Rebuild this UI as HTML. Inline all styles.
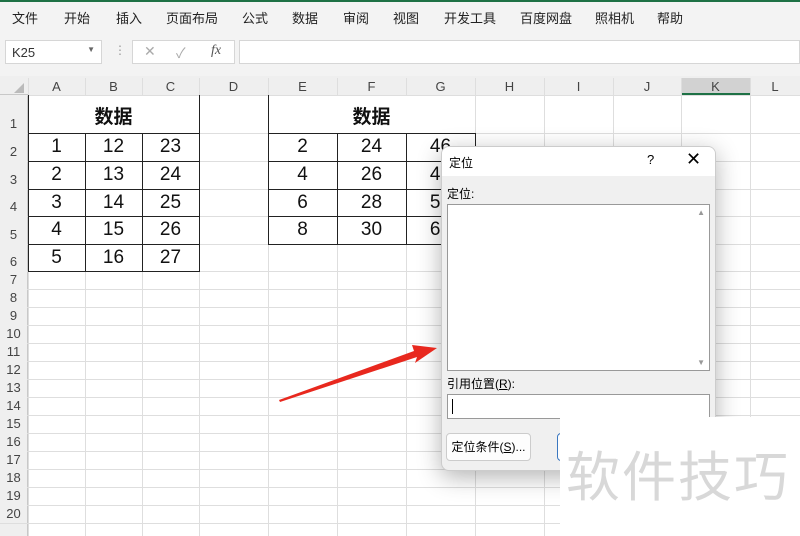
<!DOCTYPE html>
<html><head><meta charset="utf-8"><style>
*{margin:0;padding:0;box-sizing:border-box}
body{width:800px;height:536px;overflow:hidden;background:#fff;font-family:"Liberation Sans","Noto Sans CJK SC",sans-serif;position:relative}
.abs{position:absolute}
.menu{left:0;top:0;width:800px;height:30px;background:#f3f3f3;border-top:2px solid #1e7145}
.menu span{position:absolute;top:6px;font-size:13px;color:#222}
.fbar{left:0;top:30px;width:800px;height:46px;background:#f3f3f3}
.hl{position:absolute;height:1px;background:#dedede}
.vl{position:absolute;width:1px;background:#dedede}
.ch{position:absolute;top:78px;height:17px;font-size:13px;color:#444;text-align:center;line-height:17px;background:#efefef}
.rn{position:absolute;left:0;width:27px;font-size:13px;color:#444;text-align:center;background:#efefef}
.c{position:absolute;font-size:19px;color:#111;text-align:center}
.b{position:absolute;background:#222}
</style></head><body>
<div class="abs menu">
<span style="left:12px">文件</span><span style="left:64px">开始</span><span style="left:116px">插入</span><span style="left:166px">页面布局</span><span style="left:242px">公式</span><span style="left:292px">数据</span><span style="left:343px">审阅</span><span style="left:393px">视图</span><span style="left:444px">开发工具</span><span style="left:520px">百度网盘</span><span style="left:595px">照相机</span><span style="left:657px">帮助</span>
</div>
<div class="abs fbar">
<div class="abs" style="left:5px;top:10px;width:97px;height:24px;background:#fff;border:1px solid #d6d6d6;font-size:13px;padding:4px 6px;color:#333">K25<span style="position:absolute;right:6px;top:4px;font-size:8px;color:#666">▼</span></div>
<div class="abs" style="left:114px;top:13px;color:#999;font-size:12px">⋮</div>
<div class="abs" style="left:132px;top:10px;width:103px;height:24px;background:#fff;border:1px solid #d6d6d6;font-size:14px;color:#aaa"><span style="position:absolute;left:11px;top:2px">✕</span><span style="position:absolute;left:43px;top:2px">✓</span><span style="position:absolute;left:78px;top:2px;color:#555;font-style:italic;font-family:'Liberation Serif'">fx</span></div>
<div class="abs" style="left:239px;top:10px;width:561px;height:24px;background:#fff;border:1px solid #d6d6d6"></div>
</div>
<div class="abs" style="left:0;top:76px;width:800px;height:19px;background:#efefef;border-bottom:1px solid #c8c8c8"></div>
<div class="abs" style="left:0;top:95px;width:28px;height:441px;background:#efefef;border-right:1px solid #c8c8c8"></div>
<div class="abs" style="left:14px;top:83px;width:0;height:0;border-left:10px solid transparent;border-bottom:10px solid #bbb"></div>
<div class="ch" style="left:28px;width:57px">A</div><div class="ch" style="left:85px;width:57px">B</div><div class="ch" style="left:142px;width:57px">C</div><div class="ch" style="left:199px;width:69px">D</div><div class="ch" style="left:268px;width:69px">E</div><div class="ch" style="left:337px;width:69px">F</div><div class="ch" style="left:406px;width:69px">G</div><div class="ch" style="left:475px;width:69px">H</div><div class="ch" style="left:544px;width:69px">I</div><div class="ch" style="left:613px;width:68px">J</div><div class="ch" style="left:681px;width:69px;background:#d2d2d2;border-bottom:2px solid #1e7145">K</div><div class="ch" style="left:750px;width:50px">L</div>
<div id="grid"></div>
<script>
var g='',ys=[95,133,161,189,216,244,271];for(var y=289;y<=540;y+=18)ys.push(y);
var xs=[28,85,142,199,268,337,406,475,544,613,681,750];
ys.forEach(function(y,i){g+='<div class="hl" style="left:0;top:'+y+'px;width:800px"></div>';if(i<ys.length-1){var h=(ys[i+1]||y+18)-y;g+='<div class="rn" style="top:'+(y)+'px;height:'+h+'px;line-height:'+(h*2-18)+'px">'+(i+1)+'</div>';}});
xs.forEach(function(x){g+='<div class="vl" style="left:'+x+'px;top:78px;height:458px"></div>'});
function box(x1,x2,y1,y2){g+='<div class="b" style="left:'+x1+'px;top:'+y1+'px;width:'+(x2-x1+1)+'px;height:1px"></div>';}
function vb(x,y1,y2){g+='<div class="b" style="left:'+x+'px;top:'+y1+'px;width:1px;height:'+(y2-y1)+'px"></div>';}
g+='<div class="abs" style="left:29px;top:96px;width:170px;height:37px;background:#fff"></div>';
g+='<div class="abs" style="left:269px;top:96px;width:206px;height:37px;background:#fff"></div>';
g+='<div class="c" style="left:28px;top:102px;width:171px;font-weight:bold">数据</div>';
g+='<div class="c" style="left:268px;top:102px;width:207px;font-weight:bold">数据</div>';
[133,161,189,216,244,271].forEach(function(y){box(28,199,y);});
vb(28,95,272);vb(85,133,272);vb(142,133,272);vb(199,95,272);
[133,161,189,216,244].forEach(function(y){box(268,475,y);});
vb(268,95,245);vb(337,133,245);vb(406,133,245);vb(475,133,245);
var d1=[[1,12,23],[2,13,24],[3,14,25],[4,15,26],[5,16,27]],d2=[[2,24,46],[4,26,48],[6,28,50],[8,30,62]];
var cx1=[28,85,142],cx2=[268,337,406];
d1.forEach(function(r,i){r.forEach(function(v,j){g+='<div class="c" style="left:'+cx1[j]+'px;top:'+(ys[i+1]+3)+'px;width:57px">'+v+'</div>'})});
d2.forEach(function(r,i){r.forEach(function(v,j){g+='<div class="c" style="left:'+cx2[j]+'px;top:'+(ys[i+1]+3)+'px;width:69px">'+v+'</div>'})});
document.getElementById('grid').innerHTML=g;
</script>
<div class="abs" style="left:441px;top:146px;width:275px;height:325px;background:#f0f0f0;border:1px solid #ccc;border-radius:8px;box-shadow:0 6px 24px rgba(0,0,0,0.3);overflow:hidden">
<div style="height:29px;background:#fff;position:relative;font-size:12px">
<span style="position:absolute;left:7px;top:7px">定位</span>
<span style="position:absolute;left:205px;top:5px;font-size:13px">?</span>
<span style="position:absolute;left:244px;top:2px;font-size:18px">✕</span></div>
<div style="position:absolute;left:5px;top:38px;font-size:12px">定位:</div>
<div style="position:absolute;left:5px;top:57px;width:263px;height:167px;background:#fff;border:1px solid #999"><span style="position:absolute;right:4px;top:3px;font-size:8px;color:#999">▲</span><span style="position:absolute;right:4px;bottom:3px;font-size:8px;color:#999">▼</span></div>
<div style="position:absolute;left:5px;top:228px;font-size:12px">引用位置(<u>R</u>):</div>
<div style="position:absolute;left:5px;top:247px;width:263px;height:25px;background:#fff;border:1px solid #999"><div style="position:absolute;left:4px;top:4px;width:1px;height:15px;background:#000"></div></div>
<div style="position:absolute;left:4px;top:286px;width:85px;height:28px;background:#fdfdfd;border:1px solid #ccc;border-radius:4px;font-size:12px;text-align:center;line-height:26px">定位条件(<u>S</u>)...</div>
<div style="position:absolute;left:115px;top:286px;width:60px;height:28px;border:1px solid #3a77c0;border-radius:4px;background:#fdfdfd"></div>
</div>
<div class="abs" style="left:560px;top:417px;width:240px;height:119px;background:#fff"></div>
<div class="abs" style="left:566px;top:438px;font-size:54px;color:#d8d8d8;letter-spacing:2px;white-space:nowrap;font-family:'Noto Sans CJK SC',sans-serif;line-height:70px">软件技巧</div>
<svg class="abs" style="left:0;top:0" width="800" height="536"><polygon points="280,402 417,357 415,363 437,348 412,345 414,351 279,400" fill="#e8281e"/></svg>
</body></html>
